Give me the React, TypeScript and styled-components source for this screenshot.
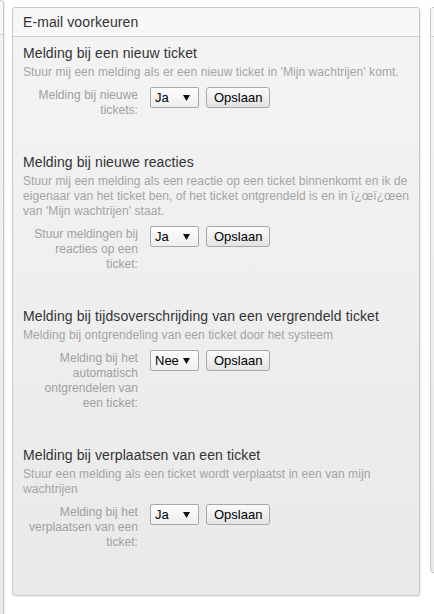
import React from "react";
import styled, { createGlobalStyle } from "styled-components";

const GlobalStyle = createGlobalStyle`
  *, *::before, *::after { box-sizing: border-box; }
  html, body { margin: 0; padding: 0; background: #ffffff; }
  body {
    font-family: "Liberation Sans", Arial, Helvetica, sans-serif;
    color: #333333;
  }
`;

const Viewport = styled.div`
  width: 434px;
  height: 614px;
  overflow: hidden;
`;

const Columns = styled.div`
  display: flex;
  align-items: flex-start;
  padding-top: 7px;
`;

const Panel = styled.section<{ $width: number; $height?: number }>`
  flex: 0 0 ${(p) => p.$width}px;
  width: ${(p) => p.$width}px;
  height: ${(p) => (p.$height ? `${p.$height}px` : "auto")};
  display: flex;
  flex-direction: column;
  border: 1px solid #c8c8c8;
  border-radius: 3px;
  background: linear-gradient(#f4f4f4, #e9e9e9);
  box-shadow: 1px 1px 1px rgba(0, 0, 0, 0.08);
`;

const EdgePanel = styled(Panel)`
  margin: -7px 0 0 -196px;
`;

const MainPanel = styled(Panel)`
  margin-left: 8px;
`;

const SidePanel = styled(Panel)`
  margin-left: 10px;
`;

const PanelHeader = styled.h2<{ $height?: number }>`
  margin: 0;
  height: ${(p) => (p.$height ? `${p.$height}px` : "29px")};
  padding: 5px 10px;
  background: #f7f7f7;
  border-bottom: 1px solid #d0d0d0;
  border-radius: 3px 3px 0 0;
  font-size: 14px;
  line-height: 18px;
  letter-spacing: 0.1px;
  font-weight: normal;
  color: #333333;
`;

const PanelBody = styled.div`
  padding: 7px 6px 10px 10px;
`;

const Section = styled.div`
  padding-bottom: 35px;
`;

const Title = styled.h3`
  margin: 0;
  font-size: 14px;
  line-height: 18px;
  letter-spacing: 0.1px;
  font-weight: normal;
  color: #333333;
`;

const Description = styled.p`
  margin: 3px 0 0 0;
  font-size: 12px;
  line-height: 15px;
  letter-spacing: 0.07px;
  color: #a4a4a4;
`;

const FieldRow = styled.div`
  display: flex;
  align-items: flex-start;
  margin-top: 7px;
`;

const FieldLabel = styled.label`
  flex: 0 0 115px;
  width: 115px;
  margin-right: 12px;
  padding-top: 1px;
  text-align: right;
  font-size: 12px;
  line-height: 15px;
  letter-spacing: 0.05px;
  color: #a0a0a0;
`;

const SelectWrap = styled.div`
  position: relative;
  flex: 0 0 49px;
  width: 49px;
  height: 21px;
`;

const Select = styled.select`
  appearance: none;
  -webkit-appearance: none;
  width: 100%;
  height: 21px;
  margin: 0;
  padding: 0 0 0 4px;
  border: 1px solid #a8a8a8;
  border-radius: 2px;
  background: linear-gradient(#fdfdfd, #eeeeee);
  font-family: "Liberation Sans", Arial, sans-serif;
  font-size: 13px;
  color: #000000;
  outline: none;
`;

const Arrow = styled.svg`
  position: absolute;
  right: 9px;
  top: 8px;
  pointer-events: none;
`;

const SaveButton = styled.button`
  margin-left: 7px;
  height: 21px;
  padding: 0 7px;
  border: 1px solid #a8a8a8;
  border-radius: 3px;
  background: linear-gradient(#fbfbfb, #e3e3e3);
  font-family: "Liberation Sans", Arial, sans-serif;
  font-size: 13px;
  line-height: 19px;
  color: #000000;
`;

type Pref = {
  title: string;
  description: string;
  label: string;
  value: string;
};

const prefs: Pref[] = [
  {
    title: "Melding bij een nieuw ticket",
    description:
      "Stuur mij een melding als er een nieuw ticket in 'Mijn wachtrijen' komt.",
    label: "Melding bij nieuwe tickets:",
    value: "Ja",
  },
  {
    title: "Melding bij nieuwe reacties",
    description:
      "Stuur mij een melding als een reactie op een ticket binnenkomt en ik de eigenaar van het ticket ben, of het ticket ontgrendeld is en in ï¿œï¿œen van 'Mijn wachtrijen' staat.",
    label: "Stuur meldingen bij reacties op een ticket:",
    value: "Ja",
  },
  {
    title: "Melding bij tijdsoverschrijding van een vergrendeld ticket",
    description: "Melding bij ontgrendeling van een ticket door het systeem",
    label: "Melding bij het automatisch ontgrendelen van een ticket:",
    value: "Nee",
  },
  {
    title: "Melding bij verplaatsen van een ticket",
    description:
      "Stuur een melding als een ticket wordt verplaatst in een van mijn wachtrijen",
    label: "Melding bij het verplaatsen van een ticket:",
    value: "Ja",
  },
];

function PrefSection({ pref, index }: { pref: Pref; index: number }) {
  const id = `pref-${index}`;
  return (
    <Section>
      <Title>{pref.title}</Title>
      <Description>{pref.description}</Description>
      <FieldRow>
        <FieldLabel htmlFor={id}>{pref.label}</FieldLabel>
        <SelectWrap>
          <Select id={id} defaultValue={pref.value}>
            <option value="Ja">Ja</option>
            <option value="Nee">Nee</option>
          </Select>
          <Arrow width="7" height="6" viewBox="0 0 7 6">
            <polygon points="0,0 7,0 3.5,6" fill="#111" />
          </Arrow>
        </SelectWrap>
        <SaveButton type="button">Opslaan</SaveButton>
      </FieldRow>
    </Section>
  );
}

export default function App() {
  return (
    <Viewport>
      <GlobalStyle />
      <Columns>
        <EdgePanel $width={200} $height={640}>
          <PanelHeader $height={34} />
        </EdgePanel>
        <MainPanel $width={408}>
          <PanelHeader>E-mail voorkeuren</PanelHeader>
          <PanelBody>
            {prefs.map((p, i) => (
              <PrefSection key={i} pref={p} index={i} />
            ))}
          </PanelBody>
        </MainPanel>
        <SidePanel $width={200} $height={566}>
          <PanelHeader />
        </SidePanel>
      </Columns>
    </Viewport>
  );
}
